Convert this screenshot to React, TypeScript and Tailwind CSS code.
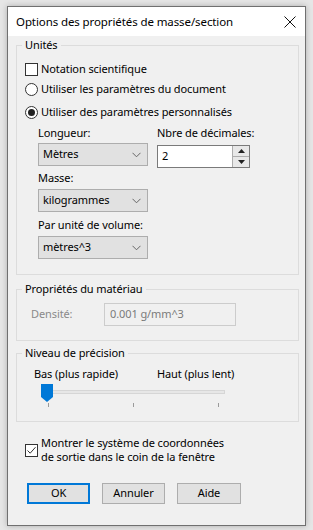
import React from "react";

const font = { fontFamily: '"Noto Sans", "Open Sans", sans-serif' };

function Chevron() {
  return (
    <svg width="9" height="6" viewBox="0 0 9 6" className="shrink-0">
      <path d="M0.5 0.8 L4.5 4.8 L8.5 0.8" fill="none" stroke="#666" strokeWidth="1" />
    </svg>
  );
}

function Select({ value }: { value: string }) {
  return (
    <div className="flex h-[23px] w-[110px] items-center justify-between border border-[#adadad] bg-[#e1e1e1] pl-[4px] pr-[6px]">
      <span>{value}</span>
      <Chevron />
    </div>
  );
}

function Group({ title, className, children }: { title: string; className: string; children: React.ReactNode }) {
  return (
    <div className={"relative w-[283px] border border-[#dcdcdc] " + className}>
      <span className="absolute left-[5px] top-[-9px] bg-[#f0f0f0] px-[3px] leading-[16px]">{title}</span>
      {children}
    </div>
  );
}

function CheckBox({ checked }: { checked?: boolean }) {
  return (
    <span className="flex h-[13px] w-[13px] shrink-0 items-center justify-center border border-[#333] bg-white">
      {checked && (
        <svg width="11" height="11" viewBox="0 0 11 11">
          <path d="M1.5 5.5 L4.2 8.2 L9.5 2.2" fill="none" stroke="#333" strokeWidth="1" />
        </svg>
      )}
    </span>
  );
}

function Radio({ checked }: { checked?: boolean }) {
  return (
    <span className="flex h-[13px] w-[13px] shrink-0 items-center justify-center rounded-full border border-[#333] bg-white">
      {checked && <span className="h-[7px] w-[7px] rounded-full bg-[#222]" />}
    </span>
  );
}

export default function App() {
  return (
    <div className="h-[530px] w-[313px] overflow-hidden bg-[#e6e6e6] pl-[7px] pt-[6px] text-[11px] tracking-[-0.1px] whitespace-nowrap text-black" style={font}>
      <div className="flex h-[520px] w-[299px] flex-col border border-[#707070] bg-[#f0f0f0] shadow-[0_0_6px_rgba(0,0,0,0.25)]">
        <div className="flex h-[29px] items-center justify-between bg-white pl-[8px] pr-[9px]">
          <span className="text-[11.5px]">Options des propriétés de masse/section</span>
          <svg width="12" height="12" viewBox="0 0 12 12">
            <path d="M0.5 0.5 L11.5 11.5 M11.5 0.5 L0.5 11.5" stroke="#111" strokeWidth="1" />
          </svg>
        </div>
        <div className="flex flex-col pl-[8px]">
          <Group title="Unités" className="mt-[9px] h-[230px] pt-[13px]">
            <div className="flex h-[20px] items-center gap-[3px] pl-[8px]">
              <CheckBox />
              <span>Notation scientifique</span>
            </div>
            <div className="flex h-[20px] items-center gap-[3px] pl-[8px]">
              <Radio />
              <span>Utiliser les paramètres du document</span>
            </div>
            <div className="mt-[3px] flex h-[20px] items-center gap-[3px] pl-[8px]">
              <Radio checked />
              <span>Utiliser des paramètres personnalisés</span>
            </div>
            <div className="mt-[1px] flex gap-[9px] pl-[21px]">
              <div className="flex w-[110px] flex-col">
                <div className="flex h-[20px] items-center">Longueur:</div>
                <Select value="Mètres" />
                <div className="flex h-[23px] items-center pt-[2px]">Masse:</div>
                <Select value="kilogrammes" />
                <div className="flex h-[24px] items-center pt-[2px]">Par unité de volume:</div>
                <Select value="mètres^3" />
              </div>
              <div className="flex flex-col">
                <div className="flex h-[20px] items-center">Nbre de décimales:</div>
                <div className="mt-[2px] flex h-[23px] w-[93px] border border-[#7a7a7a] bg-white">
                  <div className="flex flex-1 items-center pl-[4px]">2</div>
                  <div className="flex w-[17px] flex-col border-l border-[#adadad]">
                    <div className="flex flex-1 items-center justify-center border-b border-[#adadad] bg-[#e8e8e8]">
                      <svg width="7" height="4" viewBox="0 0 7 4"><path d="M0 4 L3.5 0 L7 4 Z" fill="#222" /></svg>
                    </div>
                    <div className="flex flex-1 items-center justify-center bg-[#e8e8e8]">
                      <svg width="7" height="4" viewBox="0 0 7 4"><path d="M0 0 L3.5 4 L7 0 Z" fill="#222" /></svg>
                    </div>
                  </div>
                </div>
              </div>
            </div>
          </Group>

          <Group title="Propriétés du matériau" className="mt-[14px] h-[52px] pt-[13px]">
            <div className="flex items-center pl-[14px]">
              <span className="w-[73px] text-[#8a8a8a]">Densité:</span>
              <div className="flex h-[23px] w-[132px] items-center border border-[#cccccc] bg-[#f0f0f0] pl-[5px] text-[#7a7a7a]">
                0.001 g/mm^3
              </div>
            </div>
          </Group>

          <Group title="Niveau de précision" className="mt-[12px] h-[69px] pt-[12px]">
            <div className="flex h-[16px] items-center pl-[17px] leading-[16px]">
              <span className="w-[123px]">Bas (plus rapide)</span>
              <span>Haut (plus lent)</span>
            </div>
            <div className="pl-[21px]">
              <svg width="190" height="26" viewBox="0 0 190 26" className="block">
                <rect x="5.5" y="8.5" width="181" height="3" fill="#e7e7e7" stroke="#d6d6d6" />
                <path d="M10.5 21 V25 M95.5 21 V25 M180.5 21 V25" stroke="#9a9a9a" strokeWidth="1" />
                <path d="M3 2 H15 V15 L9 20 L3 15 Z" fill="#0078d7" />
              </svg>
            </div>
          </Group>

          <div className="mt-[14px] flex items-center gap-[3px] pl-[9px] leading-[14px]">
            <CheckBox checked />
            <span>
              Montrer le système de coordonnées
              <br />
              de sortie dans le coin de la fenêtre
            </span>
          </div>

          <div className="mt-[19px] flex gap-[12px] pl-[11px]">
            <div className="flex h-[21px] w-[63px] items-center justify-center border-2 border-[#0078d7] bg-[#e1e1e1]">OK</div>
            <div className="flex h-[21px] w-[63px] items-center justify-center border border-[#adadad] bg-[#e1e1e1]">Annuler</div>
            <div className="flex h-[21px] w-[64px] items-center justify-center border border-[#adadad] bg-[#e1e1e1]">Aide</div>
          </div>
        </div>
      </div>
    </div>
  );
}
